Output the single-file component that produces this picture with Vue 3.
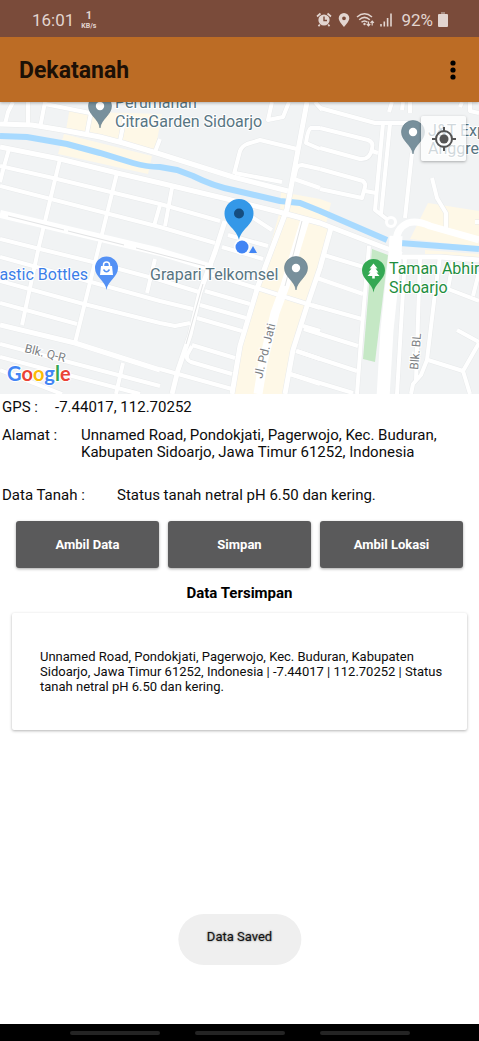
<script setup>
import { ref } from 'vue'

const gps = ref('-7.44017, 112.70252')
const address = ref('Unnamed Road, Pondokjati, Pagerwojo, Kec. Buduran, Kabupaten Sidoarjo, Jawa Timur 61252, Indonesia')
const soil = ref('Status tanah netral pH 6.50 dan kering.')
const actions = ['Ambil Data', 'Simpan', 'Ambil Lokasi']
const saved = ref([
  'Unnamed Road, Pondokjati, Pagerwojo, Kec. Buduran, Kabupaten Sidoarjo, Jawa Timur 61252, Indonesia | -7.44017 | 112.70252 | Status tanah netral pH 6.50 dan kering.'
])

const minorRoads = [
  'M13 102L8 112L5 124', 'M28 102V126', 'M45 102L40 128', 'M45 104L90 113',
  'M91 112L87 133', 'M125 116L120 141', 'M160 139L155 152',
  'M272 102L268 120L283 117L289 102',
  'M234 174L240 151Q242 146 247 144L260 140L297 149', 'M235 173L282 182',
  'M320 128H311Q308 129 306 143L320 149', 'M315 102L322 110',
  'M320 169L302 165Q297 165 296 170L294 179L320 188',
  'M320 128L368 140Q374 142 372 149Q370 160 360 159L320 148', 'M372 151L378 153',
  'M320 169L363 181Q366 184 365 187L362 198L320 189', 'M365 191L376 193',
  'M383 123L375 210L388 220', 'M390 124L381 214', 'M320 108L375 123H413',
  'M392 102L389 112', 'M403 102L402 110', 'M410 102V113', 'M462 102L460 107', 'M470 102V111L479 113',
  'M412 153L405 218', 'M432 178L437 198L446 213V229', 'M475 222H479'
]

const streets = [
  'M0 166L53 178L160 204L220 221', 'M0 186L160 227L215 243', 'M252 217L272 230', 'M228 235L268 246',
  'M9 149L3 170L0 182', 'M60 159L39 246L22 325', 'M117 173L102 234L75 343', 'M160 205L154 226',
  'M172 188L165 226', 'M0 239L40 249L93 262L160 280L202 293', 'M0 257L160 301L193 309',
  'M0 281L80 303L160 323L175 326L190 323', 'M0 303L77 324', 'M0 344L160 386', 'M0 357L140 394',
  'M0 370L62 394', 'M155 259L147 293', 'M123 363L116 394', 'M133 246L160 253', 'M160 369L232 389',
  'M222 247L263 259', 'M210 274L260 289L320 308', 'M205 291L250 304', 'M200 305L246 318',
  'M197 318L242 331', 'M192 345L235 358', 'M192 346L187 355Q186 360 191 362L232 374',
  'M303 326L320 331', 'M297 351L320 359', 'M290 374L320 384',
  'M324 255L367 268', 'M317 278L363 294', 'M312 305L362 319', 'M304 329L358 346',
  'M296 351L357 371', 'M290 374L353 393', 'M369 246L361 340L357 394',
  'M420 258L416 380', 'M440 256L435 293L427 360L421 375L413 384L411 394',
  'M428 360L463 371L479 343', 'M463 371L470 394', 'M457 330L479 342', 'M448 289L479 301',
  'M453 262L448 289', 'M479 272L473 296', 'M405 258L397 394'
]

const mainRoads = [
  'M0 124L32 125L62 130L100 137L123 143L160 154L233 177L288 191',
  'M0 147L60 159L117 173L160 183L227 199L283 213L320 223L380 246L402 254',
  'M0 325L75 343L160 370', 'M225 221L215 252L200 292L190 335L178 370L172 394',
  'M307 102L287 209L273 246L258 286L240 346L232 394',
  'M331 228L320 268L307 306L293 350L285 394',
  'M400 257H440L479 260'
]
</script>

<template>
  <div class="screen">
    <header>
      <div class="status">
        <span class="clock">16:01</span>
        <span class="speed"><b>1</b><small>KB/s</small></span>
        <span class="status-right">
          <svg width="16" height="16" viewBox="0 0 16 16" aria-hidden="true">
            <circle cx="8" cy="8" r="5.6" fill="#e2d5d0" />
            <path d="M1 4.5L4.5 1.5M15 4.5L11.500 1.500M3.800 12.500L2.500 14.300M12.200 12.500L13.500 14.300" stroke="#e2d5d0" stroke-width="1.700" />
            <path d="M8 4.500V8.500H11" fill="none" stroke="#7a4b3a" stroke-width="1.400" />
          </svg>
          <svg width="12" height="16" viewBox="0 0 12 16" aria-hidden="true">
            <path fill="#e2d5d0" fill-rule="evenodd" d="M6 1A5.300 5.300 0 0 0 .7 6.300C.7 9.500 6 15 6 15S11.300 9.500 11.300 6.300A5.300 5.300 0 0 0 6 1ZM6 4.400A1.900 1.900 0 1 1 6 8.200A1.900 1.900 0 1 1 6 4.400Z" />
          </svg>
          <svg class="wifi" width="19" height="16" viewBox="0 0 19 16" fill="none" stroke="#e2d5d0" aria-hidden="true">
            <path d="M1 5Q8.500-1.500 16 5M3.200 7.800Q8.500 3 13.800 7.800M5.500 10.300Q8.500 7.600 11.500 10.300" stroke-width="1.500" />
            <circle cx="8.500" cy="12" r="1.200" fill="#e2d5d0" stroke="none" />
            <path d="M12.500 9.500V13.500M10.800 12L12.500 13.800L14.200 12M16.200 13.500V9.200M14.500 10.800L16.200 9L17.900 10.800" stroke-width="1.200" />
          </svg>
          <svg width="14" height="16" viewBox="0 0 14 16" stroke="#e2d5d0" stroke-width="1.600" aria-hidden="true">
            <path d="M2 12V14.500M5.300 9.500V14.500M8.600 6V14.500M12 1.500V14.500" />
          </svg>
          <span class="percent">92%</span>
          <svg width="10" height="16" viewBox="0 0 10 16" aria-hidden="true">
            <path fill="#e2d5d0" d="M0 3Q0 2 1 2H9Q10 2 10 3V14Q10 15 9 15H1Q0 15 0 14Z" />
            <path fill="#a78a7f" d="M3 0H7V2H3Z" />
          </svg>
        </span>
      </div>
      <div class="appbar">
        <h1>Dekatanah</h1>
        <button class="more" aria-label="Menu">
          <svg width="6" height="20" viewBox="0 0 6 20"><circle cx="3" cy="3" r="2.600" /><circle cx="3" cy="10" r="2.600" /><circle cx="3" cy="17" r="2.600" /></svg>
        </button>
      </div>
    </header>

    <section class="map">
      <svg class="tiles" viewBox="0 102 479 292" preserveAspectRatio="xMidYMid slice">
        <rect y="102" width="479" height="292" fill="#f1f3f4" />
        <g fill="#fef8e7">
          <path d="M70 107L90 112L162 114L155 151L120 142L66 130Z" />
          <path d="M64 134L152 156L148 174L58 154Z" />
          <path d="M281 192L320 199L331 203L326 224L280 210Z" />
          <path d="M279 214L331 228L320 268L305 306L293 350L284 394H234L240 350L258 290Z" />
          <path d="M428 203L479 211V247L410 239Z" />
          <path d="M425 250L479 254V260H425Z" />
        </g>
        <path d="M372 249L388 255L375 362L363 359Z" fill="#c5e8c5" />
        <path d="M0 136L27 137L67 144L100 153L133 163Q147 167 160 167L177 170L193 176Q213 186 233 190L280 201L300 203L320 211L387 240M400 243L479 249" class="river" />
        <g class="casing">
          <path v-for="d in minorRoads" :key="d" :d="d" stroke-width="5" />
          <path v-for="d in streets" :key="d" :d="d" stroke-width="5" />
          <path v-for="d in mainRoads" :key="d" :d="d" stroke-width="6" />
        </g>
        <g class="road">
          <path v-for="d in minorRoads" :key="d" :d="d" stroke-width="4" />
          <path v-for="d in streets" :key="d" :d="d" stroke-width="4" />
          <path v-for="d in mainRoads" :key="d" :d="d" stroke-width="5" />
          <path d="M0 214L160 252L212 268" stroke-width="8" />
          <path d="M305 220L297 246L285 286L275 313L263 363L258 394" stroke-width="9" />
          <path d="M479 240L430 226Q417 220 408 223Q396 228 396 243" stroke-width="7" />
          <path d="M396 236L395 254L387 330L383 398" stroke-width="13" />
          <circle cx="391" cy="222" r="4.500" fill="#f1f3f4" stroke-width="3" />
        </g>
        <path d="M8 216L64 230M68 231L124 245M136 248L205 266M302 221L285 286M203 284L186 344" fill="none" stroke="#e2e3e4" />

        <g class="place">
          <text x="115" y="108">Perumahan</text>
          <text x="115" y="127">CitraGarden Sidoarjo</text>
          <text x="150" y="280">Grapari Telkomsel</text>
          <text x="428" y="136">J&amp;T Express</text>
          <text x="428" y="154">Anggrek</text>
          <text x="88" y="280" text-anchor="end" class="shop">Plastic Bottles</text>
          <text x="389" y="274" class="park">Taman Abhirama</text>
          <text x="389" y="293" class="park">Sidoarjo</text>
        </g>
        <g class="street-name">
          <text transform="translate(24 352) rotate(14)">Blk. Q-R</text>
          <text transform="translate(262 379) rotate(-76)">Jl. Pd. Jati</text>
          <text transform="translate(418 370) rotate(-85)">Blk. BL</text>
        </g>

        <g v-for="p in [[100, 106], [413, 132], [296, 268]]" :key="p[0]" :transform="`translate(${p[0]} ${p[1]})`">
          <path d="M0 22C-1 13-11.500 9-11.500 0A11.500 11.500 0 0 1 11.500 0C11.500 9 1 13 0 22Z" fill="#78909c" stroke="#657d89" stroke-width=".6" />
          <circle r="4.200" fill="#fff" />
        </g>
        <g transform="translate(106.500 268)">
          <path d="M0 22C-1 13-11.500 9-11.500 0A11.500 11.500 0 0 1 11.500 0C11.500 9 1 13 0 22Z" fill="#5491f5" />
          <path d="M-5.500-2H5.500L6.500 7H-6.500Z" fill="#fff" />
          <path d="M-3-2V-3A3 3 0 0 1 3-3V-2" fill="none" stroke="#fff" stroke-width="1.500" />
          <path d="M-3 1.500Q0 6 3 1.500" fill="none" stroke="#5491f5" stroke-width="1.500" />
        </g>
        <g transform="translate(373.500 270.500)">
          <path d="M0 22C-1 13-11.500 9-11.500 0A11.500 11.500 0 0 1 11.500 0C11.500 9 1 13 0 22Z" fill="#34a853" />
          <path d="M0-7L4-2H2L5 2H3L6 5.500H1.300V8H-1.300V5.500H-6L-3 2H-5L-2-2H-4Z" fill="#fff" />
        </g>

        <path d="M253 246L257 253L249 253Z" fill="#4285f4" />
        <circle cx="242" cy="247" r="8" fill="#fff" />
        <circle cx="242" cy="247" r="6.500" fill="#4285f4" />
        <path d="M239 240C237 229 224.500 225 224.500 213.500A14.500 14.500 0 0 1 253.500 213.500C253.500 225 241 229 239 240Z" fill="#3498e8" />
        <circle cx="239" cy="213.500" r="5" fill="#154d80" />

        <text x="7" y="381" class="brand"><tspan fill="#4285f4">G</tspan><tspan fill="#ea4335">o</tspan><tspan fill="#fbbc05">o</tspan><tspan fill="#4285f4">g</tspan><tspan fill="#34a853">l</tspan><tspan fill="#ea4335">e</tspan></text>
      </svg>
      <button class="locate" aria-label="Lokasi saya">
        <svg width="26" height="34" viewBox="0 0 26 34" fill="none" stroke="#555" stroke-width="2">
          <circle cx="13" cy="17" r="8" />
          <circle cx="13" cy="17" r="4.500" fill="#555" stroke="none" />
          <path d="M13 5V9M13 25V29M1 17H5M21 17H25" />
        </svg>
      </button>
    </section>

    <main>
      <dl>
        <div class="row gps"><dt>GPS :</dt><dd>{{ gps }}</dd></div>
        <div class="row address"><dt>Alamat :</dt><dd>{{ address }}</dd></div>
        <div class="row soil"><dt>Data Tanah :</dt><dd>{{ soil }}</dd></div>
      </dl>
      <div class="actions">
        <button v-for="a in actions" :key="a">{{ a }}</button>
      </div>
      <h2>Data Tersimpan</h2>
      <ul>
        <li v-for="s in saved" :key="s">{{ s }}</li>
      </ul>
    </main>

    <div class="toast" role="status">Data Saved</div>
    <nav aria-label="Sistem"><i></i><i></i><i></i></nav>
  </div>
</template>

<style>
body { margin: 0; background: #fff; }
</style>

<style scoped>
* { box-sizing: border-box; }
.screen {
  position: relative;
  display: flex;
  flex-direction: column;
  min-height: 100vh;
  font-family: Roboto, "Liberation Sans", sans-serif;
  color: #0c0c0c;
  background: #fff;
}
button { font-family: inherit; border: 0; padding: 0; cursor: pointer; }
header { position: relative; z-index: 1; box-shadow: 0 1px 3px rgba(0, 0, 0, .3); }
.status {
  display: flex;
  align-items: center;
  height: 37px;
  padding: 2px 31px 0 32px;
  background: #7a4b3a;
  color: #e2d5d0;
}
.clock { font-size: 17px; }
.speed { display: flex; flex-direction: column; align-items: center; margin-left: 7px; }
.speed b { font-size: 11px; line-height: 12px; }
.speed small { font-size: 7px; line-height: 8px; font-weight: 700; }
.status-right { display: flex; align-items: center; gap: 6px; margin-left: auto; }
.status-right .wifi { margin-right: -2px; }
.percent { font-size: 17px; margin: 0 -1px 0 2px; }
.appbar {
  display: flex;
  align-items: center;
  justify-content: space-between;
  height: 65px;
  padding: 1px 16px 0 19px;
  background: #bc6c25;
}
h1 { margin: 0; font-size: 23px; font-weight: 700; color: #1c1006; }
.more { display: flex; justify-content: center; width: 20px; background: none; }

.map { position: relative; height: 292px; overflow: hidden; }
.tiles { display: block; width: 100%; height: 100%; }
.river { fill: none; stroke: #a8daff; stroke-width: 6; }
.casing path { fill: none; stroke: #e8eaeb; stroke-linejoin: round; }
.road path, .road circle { stroke: #fff; stroke-linejoin: round; }
.road path { fill: none; }
.place text {
  font-size: 16px;
  fill: #587582;
  stroke: #fff;
  stroke-width: 2px;
  stroke-linejoin: round;
  paint-order: stroke;
}
.place .shop { fill: #3b7ee8; }
.place .park { fill: #1e8e3e; }
.street-name text { font-size: 12px; fill: #7d8184; stroke: #fff; stroke-width: 2px; paint-order: stroke; }
.brand { font-family: Lato, sans-serif; font-size: 20px; font-weight: 700; stroke: #fff; stroke-width: 2px; paint-order: stroke; }
.locate {
  position: absolute;
  top: 14px;
  right: 13px;
  display: flex;
  align-items: center;
  justify-content: center;
  width: 45px;
  height: 45px;
  border-radius: 2px;
  background: rgba(255, 255, 255, .72);
  box-shadow: 0 1px 3px rgba(0, 0, 0, .3);
}

dl { margin: 0; padding: 5px 2px 0; font-size: 15px; line-height: 17px; }
.row { display: grid; }
.gps { grid-template-columns: 53px 1fr; margin-bottom: 11px; }
.address { grid-template-columns: 79px 1fr; margin-bottom: 26px; padding-right: 24px; }
.soil { grid-template-columns: 115px 1fr; }
dd { margin: 0; }
.actions { display: grid; grid-template-columns: repeat(3, 1fr); gap: 9px; padding: 17px 16px 0; }
.actions button {
  height: 47px;
  border-radius: 3px;
  background: #5a5a5b;
  color: #fff;
  font-size: 13px;
  font-weight: 700;
  box-shadow: 0 1px 3px rgba(0, 0, 0, .35);
}
h2 { margin: 16px 0 11px; font-size: 15px; line-height: 18px; text-align: center; color: #000; }
ul { margin: 0; padding: 0 12px; list-style: none; }
li {
  padding: 36px 16px 36px 28px;
  border-radius: 2px;
  font-size: 13px;
  line-height: 15px;
  background: #fff;
  box-shadow: 0 1px 3px rgba(0, 0, 0, .3);
}
.toast {
  position: absolute;
  bottom: 76px;
  left: 50%;
  transform: translateX(-50%);
  height: 51px;
  padding: 14px 29px;
  border-radius: 26px;
  background: #efefef;
  color: #111;
  font-size: 13px;
  line-height: 17px;
  white-space: nowrap;
  text-shadow: 0 0 2px rgba(0, 0, 0, .6);
}
nav {
  display: flex;
  align-items: center;
  justify-content: center;
  gap: 35px;
  height: 17px;
  margin-top: auto;
  background: #000;
}
nav i { width: 90px; height: 4px; border-radius: 2px; background: #242424; }
</style>
